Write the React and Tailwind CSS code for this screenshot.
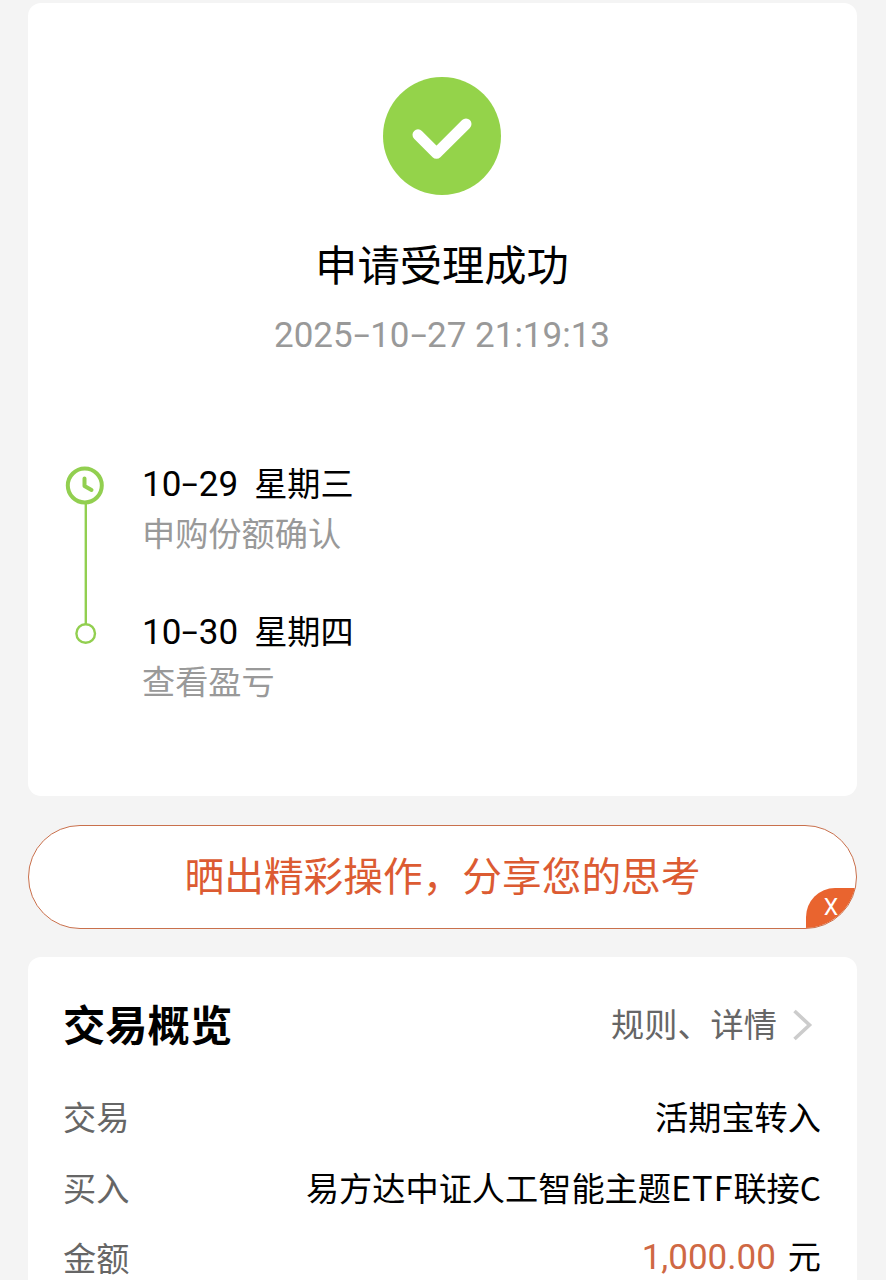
import React from 'react';

const steps = [
  { date: '10-29', day: '星期三', label: '申购份额确认' },
  { date: '10-30', day: '星期四', label: '查看盈亏' },
];

const CheckCircle = () => (
  <svg className="w-[118px] h-[118px] mr-[2px]" viewBox="0 0 118 118" fill="none">
    <circle cx="59" cy="59" r="59" fill="#94d34a" />
    <path d="M35 57.8 L53.5 76.3 L83 47" stroke="#fff" strokeWidth="11" strokeLinecap="round" strokeLinejoin="round" />
  </svg>
);

const TimelineTrack = () => (
  <svg className="w-[40px] h-[180px] shrink-0" viewBox="0 0 40 180" fill="none" stroke="#92cf50">
    <circle cx="19.8" cy="20.5" r="17" strokeWidth="4" />
    <path d="M19.5 13.5 V21 L26.5 25" strokeWidth="4" strokeLinecap="round" strokeLinejoin="round" />
    <path d="M20.8 39 V159" strokeWidth="2.4" />
    <circle cx="20.7" cy="168.5" r="9.3" strokeWidth="2.4" />
  </svg>
);

// Digits with a wide dash between the date parts
const DateText = ({ value }) => (
  <span className="font-['Roboto']">
    {value.split('-').map((part, i) => (
      <React.Fragment key={i}>
        {i > 0 && <span className="inline-block w-[0.5em] text-center scale-x-[1.65] -translate-y-px">-</span>}
        {part}
      </React.Fragment>
    ))}
  </span>
);

const Row = ({ label, children }) => (
  <div className="flex justify-between items-center h-[70.5px] text-[33.2px]">
    <span className="text-[#666]">{label}</span>
    <span className="text-black">{children}</span>
  </div>
);

const App = () => {
  return (
    <div className="h-[1280px] overflow-hidden bg-[#f4f4f4] pt-[3px] pl-[28px] pr-[29px] font-['Noto_Sans_CJK_SC',sans-serif] whitespace-nowrap">
      <div className="h-[793px] bg-white rounded-[13px] pt-[74px]">
        <div className="flex flex-col items-center">
          <CheckCircle />
          <h1 className="mt-[38px] mr-px h-[60px] leading-[60px] text-[42.3px] text-black">申请受理成功</h1>
          <p className="mt-[14px] mr-px h-[50px] leading-[50px] text-[35px] text-[#999]">
            <DateText value="2025-10-27 21:19:13" />
          </p>
        </div>

        <div className="flex mt-[108px] pl-[37px]">
          <TimelineTrack />
          <div className="ml-[37px] -mt-[8px] text-[33.2px]">
            {steps.map((step) => (
              <div key={step.date} className="h-[148px]">
                <p className="h-[50px] leading-[50px] flex gap-[16px] text-black">
                  <span className="text-[35px] -mt-px"><DateText value={step.date} /></span>
                  <span>{step.day}</span>
                </p>
                <p className="h-[50px] leading-[50px] text-[#999]">{step.label}</p>
              </div>
            ))}
          </div>
        </div>
      </div>

      <div className="relative mt-[29px] h-[104px] rounded-full border-[1.5px] border-[#c9704c] bg-white overflow-hidden">
        <p className="text-center leading-[95px] text-[39.7px] text-[#dc5b32]">晒出精彩操作，分享您的思考</p>
        <button className="absolute right-0 bottom-0 w-[50px] h-[40px] rounded-tl-[29px] bg-[#e9642f] text-white text-[23px] leading-[38px] font-['Roboto']">X</button>
      </div>

      <div className="mt-[28px] h-[400px] bg-white rounded-[13px] pt-[36px] pl-[35px] pr-[36px]">
        <div className="flex justify-between items-center h-[60px]">
          <h2 className="text-[42.3px] font-bold text-black">交易概览</h2>
          <div className="flex items-center text-[33.2px] text-[#666] pr-[8px]">
            <span>规则、详情</span>
            <svg className="ml-[16px] mt-[4px] w-[20px] h-[32px]" viewBox="0 0 20 32" fill="none" stroke="#ccc" strokeWidth="3.6">
              <path d="M1.5 2 L16.5 16 L1.5 30" />
            </svg>
          </div>
        </div>
        <div className="mt-[28px]">
          <Row label="交易">活期宝转入</Row>
          <Row label="买入">易方达中证人工智能主题<span className="text-[34.5px] tracking-[0.8px]">ETF</span>联接C</Row>
          <Row label="金额">
            <span className="font-['Roboto'] text-[35px] text-[#cf6844]">1,000.00</span>
            <span className="ml-[12px]">元</span>
          </Row>
        </div>
      </div>
    </div>
  );
};

export default App;
